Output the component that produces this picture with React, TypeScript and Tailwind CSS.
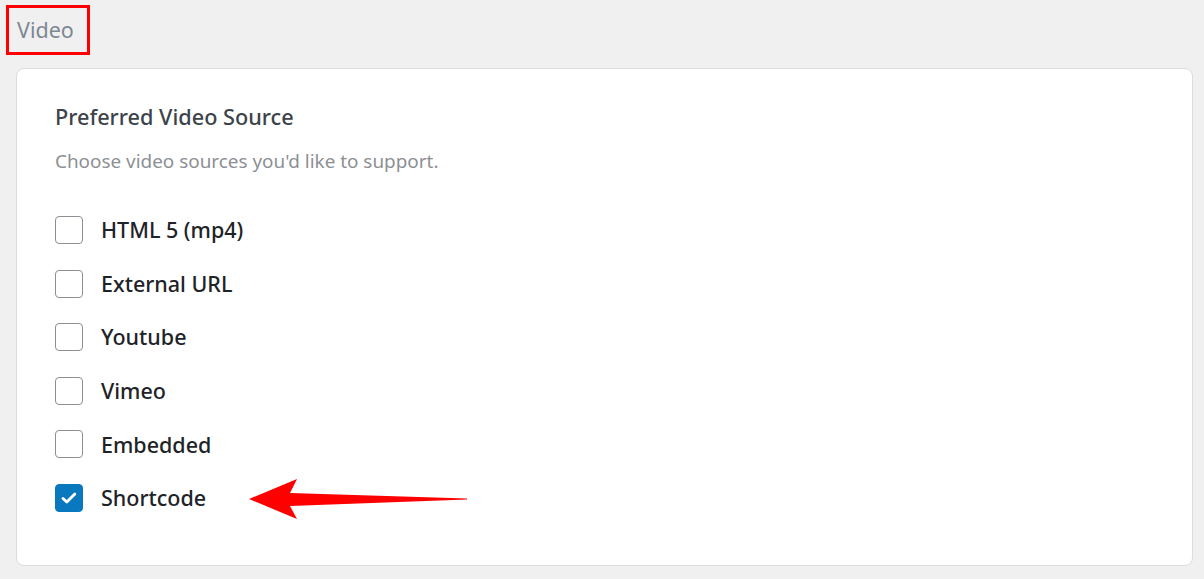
import { useState } from 'react';

const SOURCES = ['HTML 5 (mp4)', 'External URL', 'Youtube', 'Vimeo', 'Embedded', 'Shortcode'];

export default function App() {
  const [checked, setChecked] = useState<Record<string, boolean>>({ Shortcode: true });

  const toggle = (name: string) => {
    setChecked(prev => ({ ...prev, [name]: !prev[name] }));
  };

  return (
    <div className="min-h-screen bg-[#f0f0f1] pt-[5px] pb-[13px] font-['Noto_Sans','Open_Sans',sans-serif]">
      <div className="ml-[6px] flex h-[50px] w-[84px] items-center border-[3px] border-[#ff0000] pl-[8px]">
        <span className="text-[21.5px] leading-none text-[#7e8893]">Video</span>
      </div>

      <div className="ml-[16px] mt-[13px] w-[1177px] rounded-[8px] border border-[#dcdcde] bg-white pl-[38px] pt-[34px] pb-[53px]">
        <h2 className="text-[21.7px] font-medium leading-[28px] text-[#3c434a]">Preferred Video Source</h2>
        <p className="mt-[18px] text-[18.9px] leading-[24px] text-[#8c8f94]">Choose video sources you'd like to support.</p>

        <div className="mt-[43px] flex flex-col gap-[25.6px]">
          {SOURCES.map(name => (
            <label key={name} className="relative flex h-[28px] cursor-pointer items-center gap-[18px]">
              <span
                onClick={() => toggle(name)}
                className={`flex h-[28px] w-[28px] items-center justify-center rounded-[4px] border ${
                  checked[name] ? 'border-[#0a78be] bg-[#0a78be]' : 'border-[#8c8f94] bg-white'
                }`}
              >
                {checked[name] && (
                  <svg width="18" height="18" viewBox="0 0 18 18" fill="none">
                    <path d="M3 9.5l3.8 3.6 8-8" stroke="white" strokeWidth="2.8" strokeLinecap="round" strokeLinejoin="round" />
                  </svg>
                )}
              </span>
              <span className="text-[21.5px] font-medium leading-none text-[#1d2327]">{name}</span>
              {name === 'Shortcode' && (
                <svg className="absolute left-[194px] top-[-5px]" width="220" height="41" viewBox="0 0 220 41">
                  <polygon points="0,20 48,0 41,14 218,19.6 218,20.6 41,27 48,40" fill="#ff0000" />
                </svg>
              )}
            </label>
          ))}
        </div>
      </div>
    </div>
  );
}
